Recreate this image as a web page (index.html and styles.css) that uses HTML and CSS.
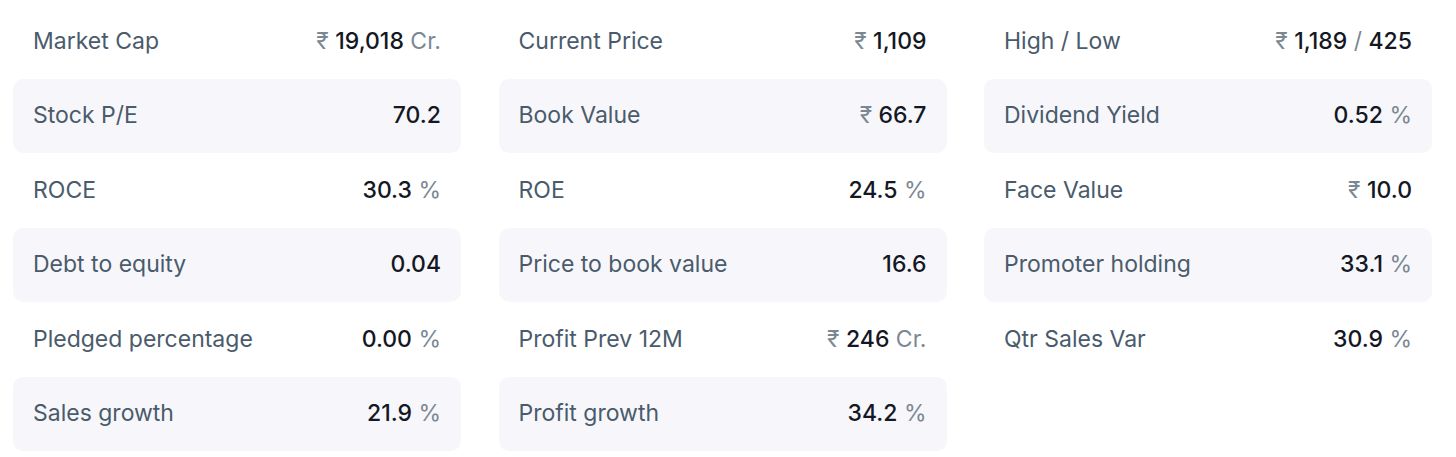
FILE: index.html
```html
<!DOCTYPE html>
<html>
<head>
<meta charset="utf-8">
<link rel="stylesheet" href="styles.css">
</head>
<body>
<div class="ratios">
  <ul class="col">
    <li class="row"><span class="name">Market Cap</span><span class="value"><span class="unit">₹</span> <span class="num">19,018</span> <span class="unit">Cr.</span></span></li>
    <li class="row shaded"><span class="name">Stock P/E</span><span class="value"><span class="num">70.2</span></span></li>
    <li class="row"><span class="name">ROCE</span><span class="value"><span class="num">30.3</span> <span class="unit">%</span></span></li>
    <li class="row shaded"><span class="name">Debt to equity</span><span class="value"><span class="num">0.04</span></span></li>
    <li class="row"><span class="name">Pledged percentage</span><span class="value"><span class="num">0.00</span> <span class="unit">%</span></span></li>
    <li class="row shaded"><span class="name">Sales growth</span><span class="value"><span class="num">21.9</span> <span class="unit">%</span></span></li>
  </ul>
  <ul class="col">
    <li class="row"><span class="name">Current Price</span><span class="value"><span class="unit">₹</span> <span class="num">1,109</span></span></li>
    <li class="row shaded"><span class="name">Book Value</span><span class="value"><span class="unit">₹</span> <span class="num">66.7</span></span></li>
    <li class="row"><span class="name">ROE</span><span class="value"><span class="num">24.5</span> <span class="unit">%</span></span></li>
    <li class="row shaded"><span class="name">Price to book value</span><span class="value"><span class="num">16.6</span></span></li>
    <li class="row"><span class="name">Profit Prev 12M</span><span class="value"><span class="unit">₹</span> <span class="num">246</span> <span class="unit">Cr.</span></span></li>
    <li class="row shaded"><span class="name">Profit growth</span><span class="value"><span class="num">34.2</span> <span class="unit">%</span></span></li>
  </ul>
  <ul class="col">
    <li class="row"><span class="name">High / Low</span><span class="value"><span class="unit">₹</span> <span class="num">1,189</span> <span class="unit">/</span> <span class="num">425</span></span></li>
    <li class="row shaded"><span class="name">Dividend Yield</span><span class="value"><span class="num">0.52</span> <span class="unit">%</span></span></li>
    <li class="row"><span class="name">Face Value</span><span class="value"><span class="unit">₹</span> <span class="num">10.0</span></span></li>
    <li class="row shaded"><span class="name">Promoter holding</span><span class="value"><span class="num">33.1</span> <span class="unit">%</span></span></li>
    <li class="row"><span class="name">Qtr Sales Var</span><span class="value"><span class="num">30.9</span> <span class="unit">%</span></span></li>
  </ul>
</div>
</body>
</html>
```

FILE: styles.css
```css
* { box-sizing: border-box; }
html, body { margin: 0; padding: 0; background: #ffffff; }
body {
  font-family: Inter, "Noto Sans", sans-serif;
  font-size: 23px;
  -webkit-font-smoothing: antialiased;
}
.ratios {
  display: grid;
  grid-template-columns: repeat(3, 448px);
  column-gap: 37.5px;
  padding: 4px 0 0 13px;
  align-items: start;
}
.col {
  list-style: none;
  margin: 0;
  padding: 0;
  display: flex;
  flex-direction: column;
}
.row {
  height: 74.5px;
  display: flex;
  align-items: center;
  justify-content: space-between;
  padding: 0 20px 1px;
  border-radius: 10px;
}
.row.shaded { background: #f7f7fb; }
.name { color: #4a5b6b; }
.value { white-space: nowrap; }
.num { color: #141824; font-weight: 500; }
.unit { color: #7b8893; }
```
